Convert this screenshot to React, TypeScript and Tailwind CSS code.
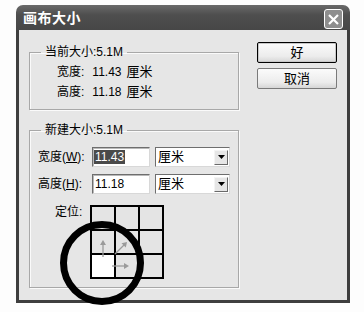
import React from 'react';

const font = { fontFamily: '"Liberation Sans", "Noto Sans CJK SC", sans-serif' };

const GroupBox = ({ title, children }: { title: string; children: React.ReactNode }) => {
    return (
        <fieldset className="border border-[#a8a8a8] shadow-[1px_1px_0_#fafafa,inset_1px_1px_0_#fafafa]">
            <legend className="ml-[11px] px-[4px] text-[12px] leading-[14px] text-black">{title}</legend>
            {children}
        </fieldset>
    );
};

const XpButton = ({ label, primary }: { label: string; primary?: boolean }) => {
    return (
        <div
            className={
                'flex h-[21px] w-[80px] items-center justify-center rounded-[2px] text-[13px] leading-none text-black ' +
                (primary
                    ? 'border border-black bg-[linear-gradient(#fbfbfb,#ececec_70%,#d6d6d6)] shadow-[inset_0_0_0_1px_#c8c8c8]'
                    : 'border border-[#7a7a7a] bg-[linear-gradient(#fbfbfb,#ececec_70%,#d6d6d6)]')
            }
        >
            {label}
        </div>
    );
};

const SizeInput = ({ value, selected }: { value: string; selected?: boolean }) => {
    return (
        <div className="flex h-[20px] w-[58px] items-center border border-[#6e6e6e] border-r-[#d8d8d8] border-b-[#d8d8d8] bg-white pl-[1px] shadow-[inset_1px_1px_0_#b8b8b8]">
            <span
                className={
                    'px-[1px] text-[12px] leading-[14px] ' +
                    (selected ? 'bg-[#4a4a4a] text-white' : 'text-black')
                }
            >
                {value}
            </span>
        </div>
    );
};

const UnitSelect = () => {
    return (
        <div className="flex h-[20px] w-[75px] items-center justify-between border border-[#6e6e6e] border-r-[#d8d8d8] border-b-[#d8d8d8] bg-white pl-[2px] pr-[1px]">
            <span className="text-[13px] leading-[14px] text-black">厘米</span>
            <div className="flex h-[15px] w-[14px] items-center justify-center border border-[#f4f4f4] border-r-[#6a6a6a] border-b-[#6a6a6a] bg-[#e6e6e6]">
                <svg width="7" height="4" viewBox="0 0 7 4">
                    <path d="M0 0h7L3.5 4z" fill="#000" />
                </svg>
            </div>
        </div>
    );
};

const AnchorGrid = () => {
    const cells = Array.from({ length: 9 }, (_, i) => i);
    return (
        <div className="relative">
            <div className="grid grid-cols-[repeat(3,22px)] grid-rows-[repeat(3,22px)] gap-[2px] bg-black p-[2px]">
                {cells.map((i) => (
                    <div key={i} className={i === 6 ? 'bg-white' : 'bg-[#e4e4e4]'} />
                ))}
            </div>
            <svg className="absolute left-0 top-0" width="74" height="74" viewBox="0 0 74 74">
                <g stroke="#9a9a9a" strokeWidth="1.3" fill="none">
                    <path d="M13 52V38" />
                    <path d="M25 49L35 39" />
                    <path d="M22 61H37" />
                </g>
                <g fill="#9a9a9a">
                    <path d="M13 35l-3 5h6z" />
                    <path d="M37 37l-5.5 1.2 4.3 4.3z" />
                    <path d="M39 61l-5-3v6z" />
                </g>
            </svg>
        </div>
    );
};

export default function App() {
    return (
        <div className="relative h-[312px] w-[364px] overflow-hidden bg-[#fdfdfd]" style={font}>
            <div className="ml-[16px] mt-[5px] flex h-[298px] w-[334px] flex-col">
                {/* title bar */}
                <div className="flex h-[25px] items-center justify-between rounded-t-[7px] bg-[linear-gradient(#6a6a6a,#4e4e4e_40%,#474747)] pl-[7px] pr-[7px]">
                    <span className="text-[14px] font-bold leading-none tracking-[0.5px] text-white">画布大小</span>
                    <div className="mt-[3px] flex h-[20px] w-[19px] items-center justify-center rounded-[3px] border border-white bg-[#8e8e8e]">
                        <svg width="11" height="11" viewBox="0 0 11 11">
                            <path d="M1 1L10 10M10 1L1 10" stroke="#fff" strokeWidth="2.2" />
                        </svg>
                    </div>
                </div>

                <div className="flex flex-1 border-x-[3px] border-b-[3px] border-[#3e3e3e] bg-[#e6e6e6]">
                    <div className="ml-[10px] mt-[15px] flex w-[210px] flex-col gap-[13px]">
                        <GroupBox title="当前大小:5.1M">
                            <div className="flex flex-col pb-[7px] pl-[27px] pt-[3px] text-[12px] leading-[20px] text-black">
                                <div className="flex">
                                    <span>宽度:</span>
                                    <span className="ml-[8px]">11.43</span>
                                    <span className="ml-[5px] text-[13px]">厘米</span>
                                </div>
                                <div className="flex">
                                    <span>高度:</span>
                                    <span className="ml-[8px]">11.18</span>
                                    <span className="ml-[5px] text-[13px]">厘米</span>
                                </div>
                            </div>
                        </GroupBox>

                        <GroupBox title="新建大小:5.1M">
                            <div className="flex flex-col pb-[8px] pl-[8px] pt-[10px] text-[12px] text-black">
                                <div className="flex items-center">
                                    <span className="w-[54px]">
                                        宽度(<span className="underline">W</span>):
                                    </span>
                                    <SizeInput value="11.43" selected />
                                    <div className="ml-[5px]">
                                        <UnitSelect />
                                    </div>
                                </div>
                                <div className="mt-[7px] flex items-center">
                                    <span className="w-[54px]">
                                        高度(<span className="underline">H</span>):
                                    </span>
                                    <SizeInput value="11.18" />
                                    <div className="ml-[5px]">
                                        <UnitSelect />
                                    </div>
                                </div>
                                <div className="mt-[11px] flex items-start">
                                    <span className="ml-[17px] mt-[0px] w-[35px] leading-[14px]">定位:</span>
                                    <AnchorGrid />
                                </div>
                            </div>
                        </GroupBox>
                    </div>

                    <div className="ml-[18px] mt-[12px] flex flex-col gap-[5px]">
                        <XpButton label="好" primary />
                        <XpButton label="取消" />
                    </div>
                </div>
            </div>

            {/* hand-drawn annotation circle */}
            <div className="absolute left-[60px] top-[221px] h-[84px] w-[84px] rounded-full border-[7px] border-black" />
        </div>
    );
}
